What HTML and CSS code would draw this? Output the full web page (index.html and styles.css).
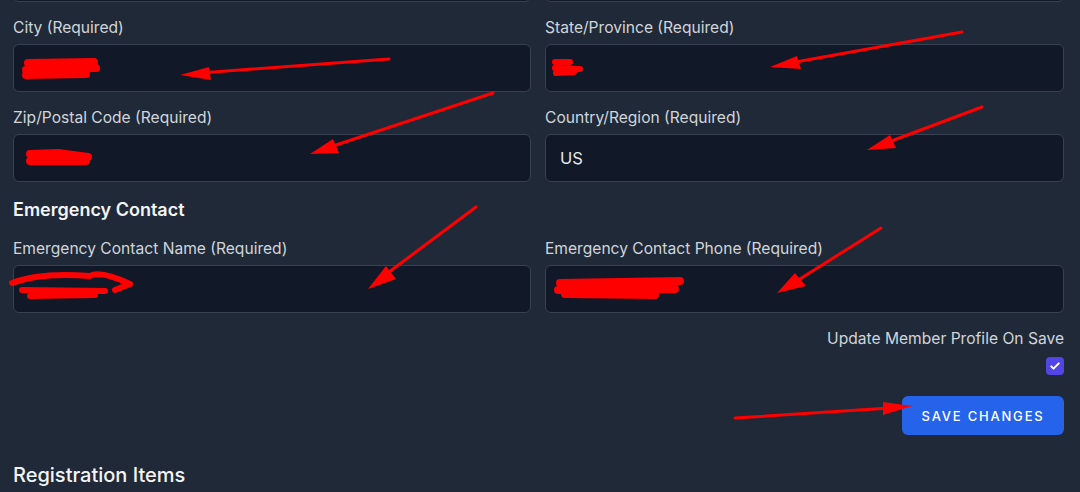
FILE: index.html
```html
<!DOCTYPE html>
<html lang="en">
<head>
<meta charset="utf-8">
<title>Profile form</title>
<link rel="stylesheet" href="styles.css">
</head>
<body>
<main class="page">
  <div class="grid prev">
    <div class="input"></div>
    <div class="input"></div>
  </div>
  <div class="grid">
    <div class="field">
      <label class="label">City (Required)</label>
      <div class="input"></div>
    </div>
    <div class="field">
      <label class="label">State/Province (Required)</label>
      <div class="input"></div>
    </div>
    <div class="field">
      <label class="label">Zip/Postal Code (Required)</label>
      <div class="input"></div>
    </div>
    <div class="field">
      <label class="label">Country/Region (Required)</label>
      <div class="input"><span class="value">US</span></div>
    </div>
  </div>
  <h2 class="section-title">Emergency Contact</h2>
  <div class="grid">
    <div class="field">
      <label class="label">Emergency Contact Name (Required)</label>
      <div class="input"></div>
    </div>
    <div class="field">
      <label class="label">Emergency Contact Phone (Required)</label>
      <div class="input"></div>
    </div>
  </div>
  <div class="options">
    <span class="label">Update Member Profile On Save</span>
    <span class="checkbox">
      <svg viewBox="0 0 16 16" width="12" height="12"><path d="M3 8.5l3 3 7-7" fill="none" stroke="#fff" stroke-width="2.6" stroke-linecap="round" stroke-linejoin="round"/></svg>
    </span>
    <button class="btn">SAVE CHANGES</button>
  </div>
  <h2 class="section-title big">Registration Items</h2>

  <svg class="marks" width="1080" height="492" viewBox="0 0 1080 492">
    <g stroke="#ff0000" stroke-width="3" stroke-linecap="round" fill="none">
      <line x1="389" y1="59" x2="200" y2="73"/>
      <line x1="962" y1="32" x2="790" y2="63"/>
      <line x1="493" y1="93" x2="330" y2="147"/>
      <line x1="982" y1="107" x2="886" y2="143"/>
      <line x1="476" y1="207" x2="385" y2="275"/>
      <line x1="881" y1="228" x2="795" y2="282"/>
      <line x1="735" y1="418" x2="890" y2="408"/>
    </g>
    <g fill="#ff0000">
      <polygon points="180,75 209,67 211,80"/>
      <polygon points="770,67 797,56 801,69"/>
      <polygon points="310,154 333,139 339,153"/>
      <polygon points="867,150 890,135 896,148"/>
      <polygon points="368,289 386,266 396,279"/>
      <polygon points="777,293 795,273 806,286"/>
      <polygon points="912,406 883,402 883,415"/>
    </g>
    <g stroke="#ff0000" stroke-linecap="round" stroke-linejoin="round" fill="none">
      <path stroke-width="8" d="M28 63 L94 62 M26 70 L96 68 M26 75 L86 74"/>
      <path stroke-width="6" d="M555 62 L570 62 M555 68 L580 69 M556 73 L574 72"/>
      <path stroke-width="8" d="M30 154 L58 153 L88 157 M30 161 L86 161"/>
      <path stroke-width="6" d="M12 283 Q40 272 90 276 Q100 270 130 284 L115 290 M22 290 L105 291 M30 296 L95 295"/>
      <path stroke-width="8" d="M560 283 L680 281 M558 290 L675 289 M565 294 L655 295"/>
    </g>
  </svg>
</main>
</body>
</html>
```

FILE: styles.css
```css
html, body {
  margin: 0;
  padding: 0;
  background: #1f2937;
}

body {
  font-family: Inter, "Noto Sans", sans-serif;
  color: #d1d5db;
  overflow: hidden;
  height: 492px;
}

.page {
  position: relative;
  padding: 0 16px 0 13px;
  display: flex;
  flex-direction: column;
}

.grid {
  display: grid;
  grid-template-columns: 518px 519px;
  column-gap: 14px;
  row-gap: 16px;
  margin-top: 16px;
}

.grid.prev {
  margin-top: -46px;
}

.field {
  display: flex;
  flex-direction: column;
}

.label {
  font-size: 15.6px;
  line-height: 20px;
  color: #d1d5db;
  margin-bottom: 6px;
}

.input {
  box-sizing: border-box;
  height: 48px;
  background: #111827;
  border: 1px solid #374151;
  border-radius: 6px;
  display: flex;
  align-items: center;
  padding: 0 14px;
}

.value {
  font-size: 16.5px;
  color: #e5e7eb;
}

.section-title {
  margin: 14px 0 0;
  font-size: 18px;
  line-height: 28px;
  font-weight: 600;
  color: #f3f4f6;
}

.section-title + .grid {
  margin-top: 15px;
}

.section-title.big {
  margin-top: 26px;
  font-size: 20px;
  font-weight: 500;
}

.options {
  margin-top: 16px;
  display: flex;
  flex-direction: column;
  align-items: flex-end;
}

.options .label {
  margin-bottom: 8px;
}

.checkbox {
  width: 18px;
  height: 18px;
  border-radius: 4px;
  background: #4f46e5;
  display: flex;
  align-items: center;
  justify-content: center;
}

.btn {
  margin-top: 21px;
  width: 162px;
  height: 39px;
  border: none;
  border-radius: 6px;
  background: #2563eb;
  color: #fff;
  font-family: Inter, "Noto Sans", sans-serif;
  font-size: 13px;
  font-weight: 500;
  letter-spacing: 1.8px;
  padding: 0;
}

.marks {
  position: absolute;
  left: 0;
  top: 0;
  pointer-events: none;
}
```
